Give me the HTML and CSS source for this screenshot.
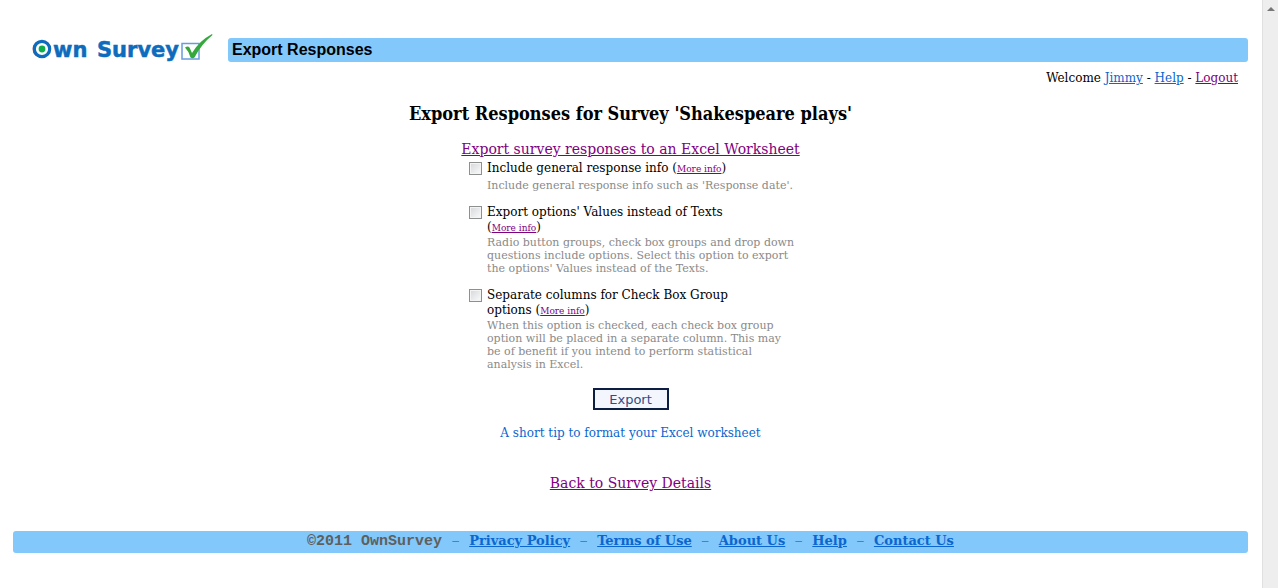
FILE: index.html
```html
<!DOCTYPE html>
<html lang="en">
<head>
  <meta charset="UTF-8">
  <title>Own Survey - Export Responses</title>
  <meta name="viewport" content="width=device-width, initial-scale=1">
  <link rel="stylesheet" href="styles.css">
</head>
<body>
  <div class="page">
    <header class="top">
      <a class="logo" href="#">
        <svg width="184" height="34" viewBox="0 0 184 34" role="img" aria-label="Own Survey">
          <g class="logo-text">
            <text x="0" y="25">O</text>
            <text x="21" y="25">wn</text>
            <text x="65" y="25">Survey</text>
          </g>
          <circle cx="10" cy="17" r="7.700" fill="#fff" stroke="#0d6cbd" stroke-width="3.200"/>
          <circle cx="10" cy="17" r="3.400" fill="#0fae4b"/>
          <rect x="150" y="11.500" width="17" height="15.500" fill="#fff" stroke="#6a9be0" stroke-width="1.500"/>
          <path d="M153 15.500q3-2 4.500 0l2.500 5.500q7-12 20-19l.5 1q-11 9-18 22.500q-2 1.500-4 0q-1.500-6-5.500-10z" fill="#35a83c"/>
        </svg>
      </a>
      <h1 class="title">Export Responses</h1>
    </header>

    <div class="user">Welcome <a href="#">Jimmy</a> - <a href="#">Help</a> - <a class="seen" href="#">Logout</a></div>

    <main>
      <h2>Export Responses for Survey 'Shakespeare plays'</h2>
      <a class="seen big" href="#">Export survey responses to an Excel Worksheet</a>

      <form class="export-form">
        <div class="option">
          <input type="checkbox" id="general">
          <div>
            <div class="name"><label for="general">Include general response info</label> (<a class="seen more" href="#">More info</a>)</div>
            <p>Include general response info such as 'Response date'.</p>
          </div>
        </div>
        <div class="option">
          <input type="checkbox" id="values">
          <div>
            <div class="name"><label for="values">Export options' Values instead of Texts</label> (<a class="seen more" href="#">More info</a>)</div>
            <p>Radio button groups, check box groups and drop down questions include options. Select this option to export the options' Values instead of the Texts.</p>
          </div>
        </div>
        <div class="option">
          <input type="checkbox" id="columns">
          <div>
            <div class="name"><label for="columns">Separate columns for Check Box Group options</label> (<a class="seen more" href="#">More info</a>)</div>
            <p>When this option is checked, each check box group option will be placed in a separate column. This may be of benefit if you intend to perform statistical analysis in Excel.</p>
          </div>
        </div>
        <button type="button">Export</button>
      </form>

      <a class="tip" href="#">A short tip to format your Excel worksheet</a>
      <a class="seen big back" href="#">Back to Survey Details</a>
    </main>

    <footer>
      <strong>©2011 OwnSurvey</strong> –
      <a href="#">Privacy Policy</a> –
      <a href="#">Terms of Use</a> –
      <a href="#">About Us</a> –
      <a href="#">Help</a> –
      <a href="#">Contact Us</a>
    </footer>
  </div>
  <div class="scroll-track"><span class="arrow"></span></div>
</body>
</html>
```
FILE: styles.css
```css
:root {
  --bar: #82c8fa;
  --link: #0b66cf;
  --seen: #800080;
  --muted: #8a8a8a;
}
* {
  box-sizing: border-box;
}
body {
  margin: 0;
  display: flex;
  min-height: 100vh;
  background: #fff;
  color: #000;
  font-family: "DejaVu Serif", Georgia, serif;
  font-size: 12px;
}
a {
  color: var(--link);
}
a.seen {
  color: var(--seen);
}
.page {
  flex: 1;
  padding: 32px 14px 0 13px;
}
.top {
  display: flex;
  align-items: flex-start;
  gap: 12px;
  padding-left: 19px;
}
.logo svg {
  display: block;
}
.logo-text {
  font-family: "DejaVu Sans", Verdana, sans-serif;
  font-size: 21px;
  font-weight: bold;
  fill: #0d6cbd;
  stroke: #0d6cbd;
  stroke-width: 0.5px;
}
.title {
  flex: 1;
  margin: 6px 0 0;
  padding-left: 4px;
  border-radius: 3px;
  background: var(--bar);
  font: bold 16px/24px "Liberation Sans", Arial, sans-serif;
}
.user {
  margin-top: 4px;
  padding-right: 10px;
  line-height: 16px;
  text-align: right;
}
main {
  display: flex;
  flex-direction: column;
  align-items: center;
}
h2 {
  margin: 16px 0 14px;
  font-family: "DejaVu Serif Condensed", Georgia, serif;
  font-size: 18px;
  line-height: 24px;
}
.big {
  font-size: 14px;
  line-height: 18px;
}
.export-form {
  width: 337px;
  display: flex;
  flex-direction: column;
  align-items: center;
  gap: 13px;
  padding: 3px 0 0 7px;
}
.option {
  width: 100%;
  display: flex;
  gap: 5px;
}
.option input {
  appearance: none;
  flex: none;
  width: 13px;
  height: 13px;
  margin: 1px 0 0;
  border: 1px solid #8e8f8f;
  background: linear-gradient(135deg, #d4d7db, #fbfbfb);
  box-shadow: inset 0 0 0 1px #f4f4f4;
}
.option input:checked {
  background: #0b66cf;
}
.name {
  width: 256px;
  line-height: 15px;
}
.more {
  font-size: 9px;
}
.option p {
  max-width: 309px;
  margin: 0;
  color: var(--muted);
  font-size: 11px;
  line-height: 13px;
}
.option:first-child p {
  margin-top: 2px;
}
button {
  width: 76px;
  height: 22px;
  margin: 4px 7px 0 0;
  padding: 0;
  border: 2px solid #0c1f42;
  border-radius: 0;
  background: #f4f6fd;
  color: #334a86;
  font: 13px "DejaVu Sans", Verdana, sans-serif;
}
.tip {
  margin-top: 14px;
  line-height: 18px;
  text-decoration: none;
}
.back {
  margin-top: 32px;
}
footer {
  margin-top: 39px;
  border-radius: 3px;
  background: var(--bar);
  color: #777;
  font: 15px/22px "Liberation Mono", monospace;
  text-align: center;
}
footer strong {
  color: #5f5f5f;
}
footer a {
  font: bold 13px "DejaVu Serif", Georgia, serif;
}
.scroll-track {
  width: 16px;
  padding-top: 7px;
  border-left: 1px solid #e0e0e0;
  background: #eee;
}
.arrow {
  display: block;
  width: 8px;
  margin: 0 auto;
  border: 4px solid transparent;
  border-top: 0;
  border-bottom-color: #777;
}
```
